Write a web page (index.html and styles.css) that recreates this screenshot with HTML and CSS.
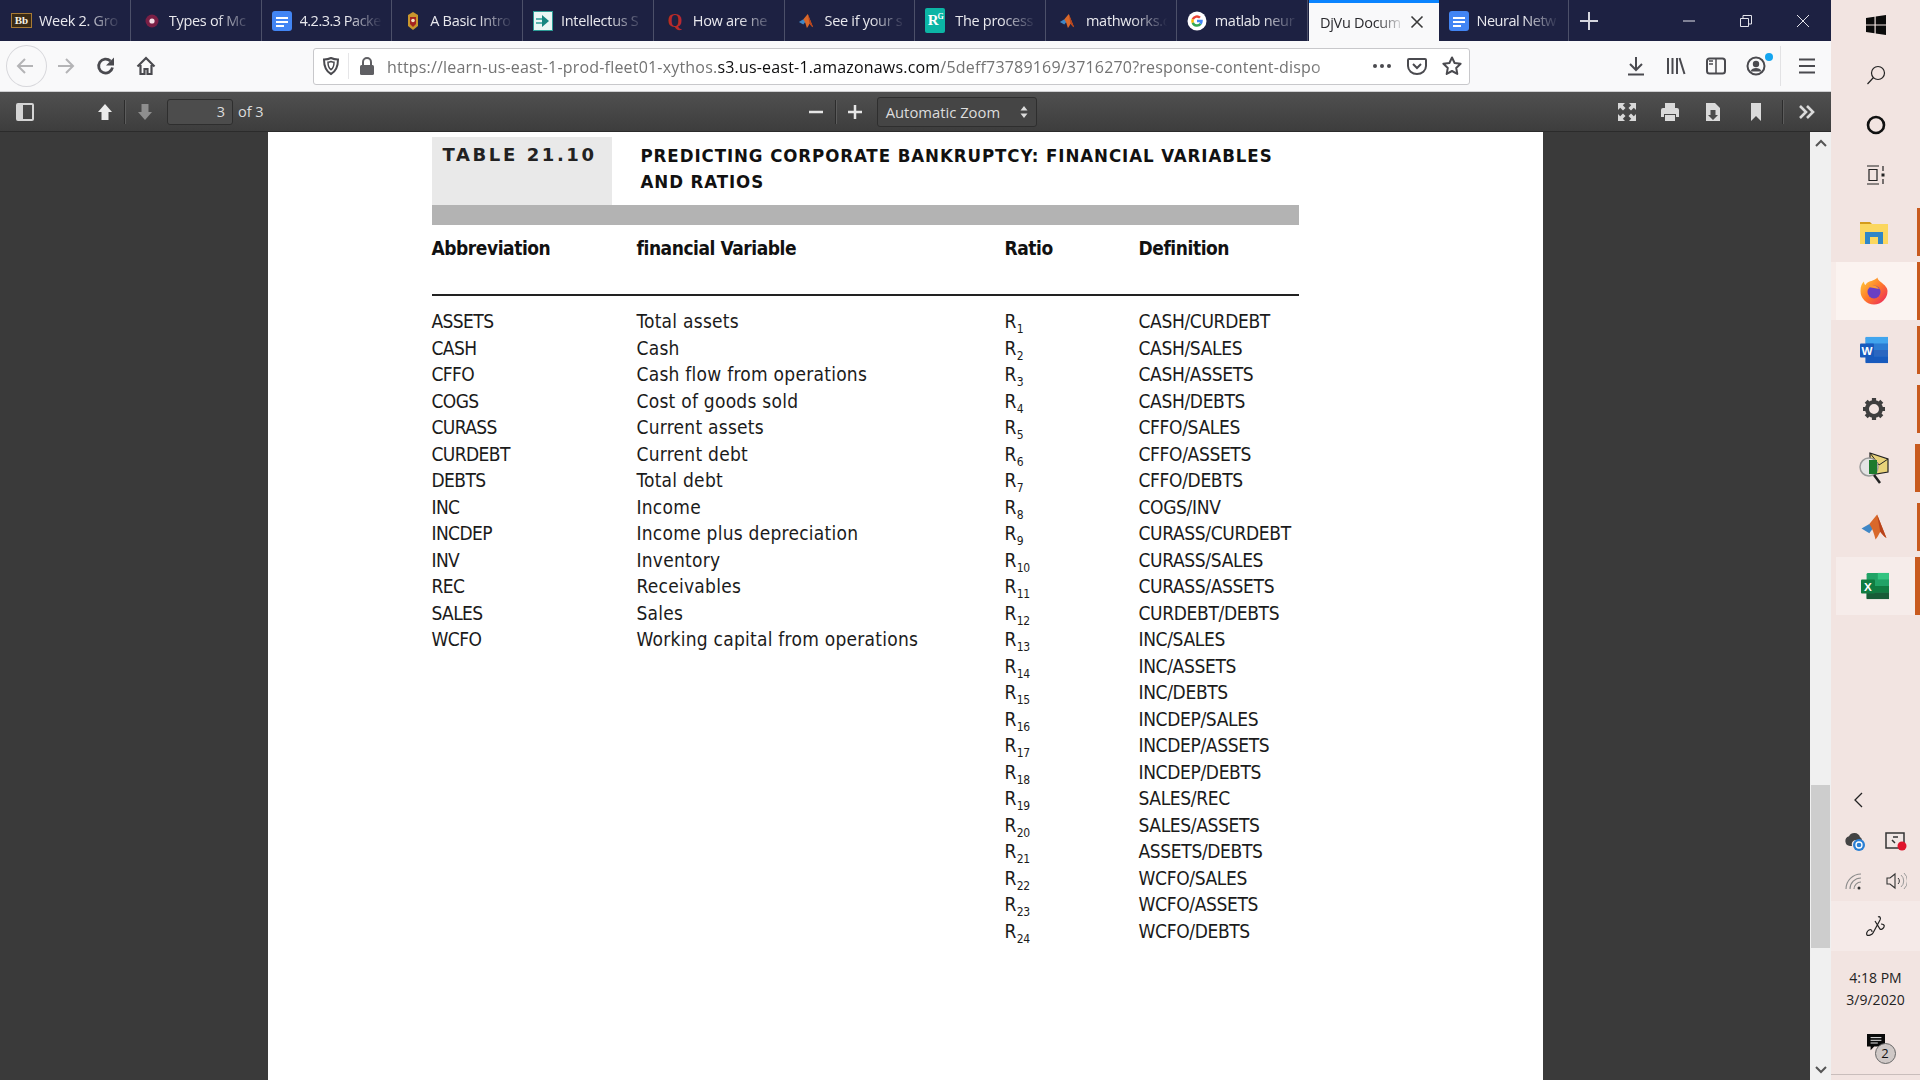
FILE: index.html
```html
<!DOCTYPE html>
<html lang="en">
<head>
<meta charset="utf-8">
<title>DjVu Document</title>
<link rel="stylesheet" href="styles.css">
</head>
<body>
<div class="desktop">
<div class="browser">
  <div class="tabbar">
    <div class="tab"><span class="fav bb">Bb</span><span class="tab-title">Week 2. Gro</span></div>
    <div class="tab"><svg class="fav" viewBox="0 0 16 16"><circle cx="8" cy="8" r="6.500" fill="#7a1f45"/><circle cx="8" cy="8" r="2.600" fill="#f4dfe6"/></svg><span class="tab-title">Types of Mc</span></div>
    <div class="tab"><svg class="fav docs" viewBox="0 0 20 20"><rect width="20" height="20" rx="3" fill="#4285f4"/><path d="M4 7h12M4 11h12M4 15h8" stroke="#fff" stroke-width="2"/></svg><span class="tab-title tight">4.2.3.3 Packe</span></div>
    <div class="tab"><svg class="fav crest" viewBox="0 0 12 20"><path d="M1 4l5-3 5 3v11l-5 4-5-4z" fill="#c9962d"/><path d="M3 6h6v7l-3 3-3-3z" fill="#a5231f"/><circle cx="6" cy="9.500" r="1.800" fill="#f1e2c4"/></svg><span class="tab-title">A Basic Intro</span></div>
    <div class="tab"><svg class="fav docs" viewBox="0 0 20 20"><rect x=".5" y=".5" width="19" height="19" fill="#e9f6f4" stroke="#2d9c96"/><path d="M9 4l7 6-7 6z" fill="#14857f"/><path d="M3 8h6M3 12h6" stroke="#2d9c96" stroke-width="1.500"/></svg><span class="tab-title">Intellectus S</span></div>
    <div class="tab"><span class="fav quora">Q</span><span class="tab-title">How are ne</span></div>
    <div class="tab"><svg class="fav fav-m" viewBox="0 0 18 18"><use href="#matlab"/></svg><span class="tab-title">See if your s</span></div>
    <div class="tab"><span class="fav rg">R<sup class="rg-g">G</sup></span><span class="tab-title">The process</span></div>
    <div class="tab"><svg class="fav fav-m" viewBox="0 0 18 18"><use href="#matlab"/></svg><span class="tab-title">mathworks.c</span></div>
    <div class="tab"><svg class="fav docs fav-g" viewBox="0 0 20 20"><circle cx="10" cy="10" r="9.500" fill="#fff"/><path d="M5.800 8.300A4.500 4.500 0 0 1 13 6.700" fill="none" stroke="#ea4335" stroke-width="2.500"/><path d="M5.800 8.300a4.500 4.500 0 0 0 0 3.400" fill="none" stroke="#fbbc05" stroke-width="2.500"/><path d="M5.800 11.700a4.500 4.500 0 0 0 7.800 1" fill="none" stroke="#34a853" stroke-width="2.500"/><path d="M10 10h4.500a4.500 4.500 0 0 1-1 2.800" fill="none" stroke="#4285f4" stroke-width="2.500"/></svg><span class="tab-title">matlab neur</span></div>
    <div class="tab tab-active"><span class="tab-title">DjVu Docum</span><svg class="tab-close" viewBox="0 0 14 14"><path d="M1.500 1.500l11 11M12.500 1.500l-11 11" stroke="#3a3a3a" stroke-width="1.600"/></svg></div>
    <div class="tab"><svg class="fav docs" viewBox="0 0 20 20"><rect width="20" height="20" rx="3" fill="#4285f4"/><path d="M4 7h12M4 11h12M4 15h8" stroke="#fff" stroke-width="2"/></svg><span class="tab-title tight">Neural Netw</span></div>
    <svg class="newtab" viewBox="0 0 18 18"><path d="M9 0v18M0 9h18" stroke="#d5d6de" stroke-width="2"/></svg>
    <div class="winctl">
      <svg class="winbtn" viewBox="0 0 14 14"><path d="M1 7h12" stroke="#e3e3ea"/></svg>
      <svg class="winbtn" viewBox="0 0 14 14"><path d="M1.500 4.500h8v8h-8zM4 4.500V1.500h8.500V10H9.500" fill="none" stroke="#e3e3ea"/></svg>
      <svg class="winbtn" viewBox="0 0 14 14"><path d="M1 1l12 12M13 1L1 13" stroke="#e3e3ea"/></svg>
    </div>
  </div>

  <div class="navbar">
    <div class="nav-btn back"><svg class="ico" viewBox="0 0 20 20"><path d="M18 10H3M10 3l-7 7 7 7" fill="none" stroke="#b4b4b6" stroke-width="2"/></svg></div>
    <div class="nav-btn"><svg class="ico" viewBox="0 0 20 20"><path d="M2 10h15M10 3l7 7-7 7" fill="none" stroke="#b4b4b6" stroke-width="2"/></svg></div>
    <div class="nav-btn"><svg class="ico" viewBox="0 0 20 20"><path d="M16.500 11.500A7 7 0 1 1 14.500 5" fill="none" stroke="#4a4a4f" stroke-width="2.800"/><path d="M18 1.500v8h-8z" fill="#4a4a4f"/></svg></div>
    <div class="nav-btn"><svg class="ico" viewBox="0 0 20 20"><path d="M1.500 10.500L10 2l8.500 8.500M4.500 9v9h4v-5h3v5h4V9" fill="none" stroke="#4a4a4f" stroke-width="2.200"/></svg></div>
    <div class="urlbar">
      <div class="url-shield"><svg class="ico" viewBox="0 0 20 20"><path d="M10 2c2.500 1.200 4.500 1.500 7 1.500 0 7-1.500 11.500-7 14.500C4.500 15 3 10.500 3 3.500c2.500 0 4.500-.3 7-1.500z" fill="none" stroke="#4a4a4f" stroke-width="2"/><path d="M10 5.500c1 .5 2 .7 3 .7 0 3.500-1 6-3 7.500-2-1.500-3-4-3-7.500 1 0 2-.2 3-.7z" fill="none" stroke="#4a4a4f" stroke-width="1.500"/></svg></div>
      <svg class="lock" viewBox="0 0 16 18"><path d="M4 8V5a4 4 0 0 1 8 0v3" fill="none" stroke="#5f5f63" stroke-width="2"/><rect x="1" y="8" width="14" height="10" rx="1.500" fill="#5f5f63"/></svg>
      <div class="url-text">https://learn-us-east-1-prod-fleet01-xythos.<span class="url-host">s3.us-east-1.amazonaws.com</span>/5deff73789169/3716270?response-content-dispo</div>
      <div class="url-actions">
        <svg class="url-ico" viewBox="0 0 20 20"><circle cx="3" cy="10" r="2" fill="#4a4a4f"/><circle cx="10" cy="10" r="2" fill="#4a4a4f"/><circle cx="17" cy="10" r="2" fill="#4a4a4f"/></svg>
        <svg class="url-ico" viewBox="0 0 20 20"><path d="M2 3h16a1 1 0 0 1 1 1v6a9 8 0 0 1-18 0V4a1 1 0 0 1 1-1z" fill="none" stroke="#4a4a4f" stroke-width="2"/><path d="M6 8l4 4 4-4" fill="none" stroke="#4a4a4f" stroke-width="2"/></svg>
        <svg class="url-ico" viewBox="0 0 20 20"><path d="M10 1.500l2.600 5.500 6 .8-4.400 4.100 1.100 6L10 15l-5.300 2.900 1.100-6L1.400 7.800l6-.8z" fill="none" stroke="#4a4a4f" stroke-width="2" stroke-linejoin="round"/></svg>
      </div>
    </div>
    <div class="nav-right">
      <div class="nav-btn"><svg class="ico" viewBox="0 0 20 20"><path d="M10 1v12M4 8l6 6 6-6M2 18.500h16" fill="none" stroke="#4a4a4f" stroke-width="2"/></svg></div>
      <div class="nav-btn"><svg class="ico" viewBox="0 0 20 20"><path d="M2 2v16M6.500 2v16M11 2v16M13.500 2l5 16" fill="none" stroke="#4a4a4f" stroke-width="2"/></svg></div>
      <div class="nav-btn"><svg class="ico" viewBox="0 0 20 20"><rect x="1" y="2.500" width="18" height="15" rx="2.500" fill="none" stroke="#4a4a4f" stroke-width="2"/><path d="M10 3v14" stroke="#4a4a4f" stroke-width="1.500"/><path d="M3 5h4M3 8h4" stroke="#4a4a4f" stroke-width="1.500"/></svg></div>
      <div class="nav-btn account"><svg class="ico" viewBox="0 0 20 20"><circle cx="10" cy="10" r="8.500" fill="none" stroke="#4a4a4f" stroke-width="2"/><circle cx="10" cy="8" r="3.200" fill="#4a4a4f"/><path d="M4.500 15.500c1-3 3-3.500 5.500-3.500s4.500.5 5.500 3.500" fill="#4a4a4f"/></svg><span class="badge-dot"></span></div>
      <div class="nav-sep"></div>
      <svg class="ico menu" viewBox="0 0 20 20"><path d="M2 3.500h16M2 10h16M2 16.500h16" stroke="#4a4a4f" stroke-width="2.200"/></svg>
    </div>
  </div>

  <div class="pdfbar">
    <svg class="pdf-ico sidebar" viewBox="0 0 18 18"><rect x="1" y="1" width="16" height="16" rx="1" fill="none" stroke="#d4d4d4" stroke-width="2"/><rect x="2" y="2" width="5" height="14" fill="#d4d4d4"/></svg>
    <svg class="pdf-ico up" viewBox="0 0 18 18"><path d="M9 1l7 8h-3.500v8h-7V9H2z" fill="#ececec"/></svg>
    <span class="pdf-sep"></span>
    <svg class="pdf-ico down" viewBox="0 0 18 18"><path d="M9 17l7-8h-3.500V1h-7v8H2z" fill="#8e8e8e"/></svg>
    <div class="page-input">3</div>
    <span class="page-of">of 3</span>
    <div class="zoom-group">
      <svg class="pdf-ico" viewBox="0 0 14 14"><path d="M0 7h14" stroke="#e6e6e6" stroke-width="2.500"/></svg>
      <span class="pdf-sep zoom-sep"></span>
      <svg class="pdf-ico" viewBox="0 0 14 14"><path d="M0 7h14M7 0v14" stroke="#e6e6e6" stroke-width="2.500"/></svg>
      <div class="zoom-select"><span>Automatic Zoom</span><svg class="caret" viewBox="0 0 8 14"><path d="M4 1l3.500 4.500h-7zM4 13L.5 8.500h7z" fill="#dcdcdc"/></svg></div>
    </div>
    <div class="pdf-right">
      <svg class="pdf-ico" viewBox="0 0 18 18"><path d="M0 0h7L4.800 2.200 7.500 5 5 7.500 2.200 4.800 0 7zM18 0h-7l2.200 2.200L10.500 5 13 7.500l2.800-2.700L18 7zM0 18h7l-2.200-2.200 2.700-2.800L5 10.500l-2.800 2.700L0 11zM18 18h-7l2.200-2.200-2.700-2.800 2.500-2.500 2.800 2.700L18 11z" fill="#d8d8d8"/></svg>
      <svg class="pdf-ico print" viewBox="0 0 20 18"><path d="M5 0h10v5H5zM1 7a2 2 0 0 1 2-2h14a2 2 0 0 1 2 2v7h-3v-3H4v3H1z" fill="#dadada"/><path d="M5 12h10v6H5z" fill="#dadada"/></svg>
      <svg class="pdf-ico" viewBox="0 0 18 18"><path d="M2 0h9l5 5v13H2z" fill="#dadada"/><path d="M6.500 7h5v5H14l-5 5-5-5h2.500z" fill="#4a4a4a"/></svg>
      <svg class="pdf-ico" viewBox="0 0 18 18"><path d="M4 0h10v18l-5-5-5 5z" fill="#dadada"/></svg>
      <span class="pdf-sep right-sep"></span>
      <svg class="pdf-ico more" viewBox="0 0 18 14"><path d="M2 1l6 6-6 6M9 1l6 6-6 6" fill="none" stroke="#dadada" stroke-width="2.600"/></svg>
    </div>
  </div>

  <div class="viewer">
    <div class="canvas">
      <div class="page">
        <div class="table-head">
          <div class="table-label">TABLE 21.10</div>
          <div class="table-title">PREDICTING CORPORATE BANKRUPTCY: FINANCIAL VARIABLES<br>AND RATIOS</div>
        </div>
        <div class="table-band"></div>
        <div class="col-heads row"><span>Abbreviation</span><span>financial Variable</span><span>Ratio</span><span>Definition</span></div>
        <div class="table-body">
          <div class="row"><span>ASSETS</span><span>Total assets</span><span>R<sub>1</sub></span><span>CASH/CURDEBT</span></div>
          <div class="row"><span>CASH</span><span>Cash</span><span>R<sub>2</sub></span><span>CASH/SALES</span></div>
          <div class="row"><span>CFFO</span><span>Cash flow from operations</span><span>R<sub>3</sub></span><span>CASH/ASSETS</span></div>
          <div class="row"><span>COGS</span><span>Cost of goods sold</span><span>R<sub>4</sub></span><span>CASH/DEBTS</span></div>
          <div class="row"><span>CURASS</span><span>Current assets</span><span>R<sub>5</sub></span><span>CFFO/SALES</span></div>
          <div class="row"><span>CURDEBT</span><span>Current debt</span><span>R<sub>6</sub></span><span>CFFO/ASSETS</span></div>
          <div class="row"><span>DEBTS</span><span>Total debt</span><span>R<sub>7</sub></span><span>CFFO/DEBTS</span></div>
          <div class="row"><span>INC</span><span>Income</span><span>R<sub>8</sub></span><span>COGS/INV</span></div>
          <div class="row"><span>INCDEP</span><span>Income plus depreciation</span><span>R<sub>9</sub></span><span>CURASS/CURDEBT</span></div>
          <div class="row"><span>INV</span><span>Inventory</span><span>R<sub>10</sub></span><span>CURASS/SALES</span></div>
          <div class="row"><span>REC</span><span>Receivables</span><span>R<sub>11</sub></span><span>CURASS/ASSETS</span></div>
          <div class="row"><span>SALES</span><span>Sales</span><span>R<sub>12</sub></span><span>CURDEBT/DEBTS</span></div>
          <div class="row"><span>WCFO</span><span>Working capital from operations</span><span>R<sub>13</sub></span><span>INC/SALES</span></div>
          <div class="row"><span></span><span></span><span>R<sub>14</sub></span><span>INC/ASSETS</span></div>
          <div class="row"><span></span><span></span><span>R<sub>15</sub></span><span>INC/DEBTS</span></div>
          <div class="row"><span></span><span></span><span>R<sub>16</sub></span><span>INCDEP/SALES</span></div>
          <div class="row"><span></span><span></span><span>R<sub>17</sub></span><span>INCDEP/ASSETS</span></div>
          <div class="row"><span></span><span></span><span>R<sub>18</sub></span><span>INCDEP/DEBTS</span></div>
          <div class="row"><span></span><span></span><span>R<sub>19</sub></span><span>SALES/REC</span></div>
          <div class="row"><span></span><span></span><span>R<sub>20</sub></span><span>SALES/ASSETS</span></div>
          <div class="row"><span></span><span></span><span>R<sub>21</sub></span><span>ASSETS/DEBTS</span></div>
          <div class="row"><span></span><span></span><span>R<sub>22</sub></span><span>WCFO/SALES</span></div>
          <div class="row"><span></span><span></span><span>R<sub>23</sub></span><span>WCFO/ASSETS</span></div>
          <div class="row"><span></span><span></span><span>R<sub>24</sub></span><span>WCFO/DEBTS</span></div>
        </div>
      </div>
    </div>
    <div class="scrollbar">
      <svg class="sb-arrow" viewBox="0 0 12 8"><path d="M1 7l5-5 5 5" fill="none" stroke="#555" stroke-width="2"/></svg>
      <div class="sb-thumb"></div>
      <svg class="sb-arrow" viewBox="0 0 12 8"><path d="M1 1l5 5 5-5" fill="none" stroke="#555" stroke-width="2"/></svg>
    </div>
  </div>
</div>

<aside class="taskbar">
  <div class="tb-sys">
    <svg class="tb-sysico" viewBox="0 0 20 20"><path d="M0 3l8.500-1.300V9.500H0zM9.700 1.500L20 0v9.500H9.700zM0 10.500h8.500v7.800L0 17zM9.700 10.500H20V20L9.700 18.500z" fill="#0b0b0b"/></svg>
    <svg class="tb-sysico" viewBox="0 0 20 20"><circle cx="12" cy="8" r="6.500" fill="none" stroke="#222" stroke-width="1.200"/><path d="M7.500 12.500L1.500 19" stroke="#222" stroke-width="1.200"/></svg>
    <svg class="tb-sysico" viewBox="0 0 20 20"><circle cx="10" cy="10" r="8" fill="none" stroke="#111" stroke-width="2.600"/></svg>
    <svg class="tb-sysico" viewBox="0 0 20 20"><path d="M1 1h12M1 19h12M3 4.500h8v11H3zM17 1v5M17 14v5" fill="none" stroke="#222" stroke-width="1.200"/><rect x="15.500" y="8.500" width="3" height="3" fill="#222"/></svg>
  </div>
  <div class="tb-apps">
    <div class="tb-app"><svg class="tb-ico" viewBox="0 0 28 24"><path d="M0 2h10l2 2H0z" fill="#d49c1c"/><path d="M0 4h28v20H0z" fill="#fbd75f"/><path d="M5 12h18v12h-5v-7h-8v7H5z" fill="#2f86c8"/></svg></div>
    <div class="tb-app tb-app-active"><svg class="tb-ico" viewBox="0 0 28 28"><defs><linearGradient id="fx" x1="0" y1="0" x2="1" y2="1"><stop offset="0" stop-color="#ffd23c"/><stop offset=".5" stop-color="#ff7a2a"/><stop offset="1" stop-color="#e91e63"/></linearGradient></defs><path d="M14 27.500A13.500 13.500 0 0 1 .5 14C.5 9 2 6 4 4.500c0 2 .5 3 1.500 3.500C7 5 10 4 11.500 4c2-1 5-2 6-3.500 0 2 1.500 3 4 5 3 2.500 6 5 6 8.500A13.500 13.500 0 0 1 14 27.500z" fill="url(#fx)"/><circle cx="14" cy="15" r="6.500" fill="#6b3fc4"/><path d="M8 10c3-3 9-2 11 2-3-1-7-1-11-2z" fill="#ff9a30"/></svg></div>
    <div class="tb-app"><svg class="tb-ico" viewBox="0 0 30 28"><rect x="6" y="0" width="24" height="28" rx="1.500" fill="#2b7cd3"/><rect x="6" y="0" width="24" height="7" fill="#41a5ee"/><rect x="6" y="14" width="24" height="7" fill="#2b66c0"/><rect x="6" y="21" width="24" height="7" fill="#185abd"/><rect x="0" y="7" width="15" height="15" rx="1" fill="#185abd"/><text class="app-letter" x="7.500" y="19">W</text></svg></div>
    <div class="tb-app"><svg class="tb-ico gear" viewBox="0 0 24 24"><circle cx="12" cy="12" r="7" fill="none" stroke="#3f3f3f" stroke-width="4"/><path d="M12 1v5M12 18v5M1 12h5M18 12h5M4.200 4.200l3.500 3.500M16.300 16.300l3.500 3.500M19.800 4.200l-3.500 3.500M7.700 16.300l-3.500 3.500" stroke="#3f3f3f" stroke-width="4.200"/></svg></div>
    <div class="tb-app tb-app-wide"><svg class="tb-ico mail" viewBox="0 0 30 32"><path d="M11 1l18 6v13l-18 3z" fill="#e8d27a" stroke="#222" stroke-width="1.200"/><path d="M11 1l9 12 9-6" fill="none" stroke="#222"/><circle cx="10" cy="15" r="9" fill="#e4e4e4" stroke="#9a9a9a" stroke-width="1.500"/><path d="M10 8h8v14h-8z" fill="#1d7a2e"/><path d="M15 23l6 8" stroke="#222" stroke-width="2.500"/></svg></div>
    <div class="tb-app"><svg class="tb-ico" viewBox="0 0 18 18"><use href="#matlab"/></svg></div>
    <div class="tb-app tb-app-wide tb-app-hover"><svg class="tb-ico" viewBox="0 0 30 28"><rect x="6" y="0" width="24" height="28" rx="1.500" fill="#21a366"/><rect x="18" y="0" width="12" height="7" fill="#33c481"/><rect x="6" y="14" width="24" height="7" fill="#107c41"/><rect x="6" y="21" width="24" height="7" fill="#185c37"/><rect x="0" y="7" width="15" height="15" rx="1" fill="#107c41"/><text class="app-letter" x="7.500" y="19">X</text></svg></div>
  </div>
  <div class="tb-tray">
    <svg class="chev" viewBox="0 0 10 16"><path d="M9 1L2 8l7 7" fill="none" stroke="#222" stroke-width="1.300"/></svg>
    <div class="tray-grid">
      <svg class="tray-ico" viewBox="0 0 22 20"><path d="M6 15a5 5 0 0 1-1-9.800A6 6 0 0 1 16 6a4 4 0 0 1 2 3H11a5 5 0 0 0-3 6z" fill="#444"/><circle cx="15" cy="14" r="6" fill="#2a7fd4"/><circle cx="15" cy="14" r="3" fill="none" stroke="#fff" stroke-width="1.300"/></svg>
      <svg class="tray-ico" viewBox="0 0 22 20"><path d="M1 2h18v15H1z" fill="#f0e6e4" stroke="#333" stroke-width="1.500"/><path d="M8 6h5M7 9l3 3" stroke="#333" stroke-width="1.500"/><circle cx="17" cy="15" r="4.500" fill="#e0142c"/></svg>
      <svg class="tray-ico" viewBox="0 0 22 20"><path d="M2 18A15 15 0 0 1 17 3M6 18A11 11 0 0 1 17 7M10 18a7 7 0 0 1 7-7" fill="none" stroke="#8a8a8a" stroke-width="1.100"/><circle cx="15" cy="17" r="1.500" fill="#333"/></svg>
      <svg class="tray-ico" viewBox="0 0 22 20"><path d="M2 7h3l5-4v14l-5-4H2z" fill="none" stroke="#333" stroke-width="1.100"/><path d="M13 7a4 4 0 0 1 0 6" fill="none" stroke="#333"/><path d="M16 4a8 8 0 0 1 0 12M19 2a11 11 0 0 1 0 16" fill="none" stroke="#999"/></svg>
    </div>
    <div class="tray-pen"><svg class="tray-ico pen" viewBox="0 0 22 22"><path d="M13 2c2-1 3 1 2 3L8 18c-1 2-5 3-6 2s0-4 2-5 3 0 3 2M10 6l5 8c1 1 3 0 4-2s-1-3-3-3" fill="none" stroke="#222" stroke-width="1.200"/></svg></div>
    <div class="clock"><div>4:18 PM</div><div>3/9/2020</div></div>
    <div class="notify"><svg class="notify-ico" viewBox="0 0 20 20"><path d="M0 0h20v14H8l-4 4v-4H0z" fill="#0a0a0a"/><path d="M4 4h12M4 7h12M4 10h8" stroke="#fff"/></svg><span class="notify-count">2</span></div>
  </div>
</aside>
</div>

<svg class="defs" width="0" height="0"><defs><g id="matlab"><path d="M1 10l5-3 3 2-3 4z" fill="#3f87c6"/><path d="M6 7l5-6 6 15c-2-1-3-3-4-4-1 2-2 4-3 5-1-4-2-7-4-10z" fill="#d9682a"/><path d="M11 1l6 15c-2-1-3-3-4-4z" fill="#b8431c"/></g></defs></svg>
</body>
</html>
```

FILE: styles.css
```css
* { box-sizing: border-box; }
html, body { margin: 0; height: 100%; overflow: hidden; }
body { font-family: "Open Sans", "Noto Sans", sans-serif; }
svg { display: block; flex: none; }
.defs { position: absolute; }

.desktop { display: flex; width: 1920px; height: 1080px; }
.browser { width: 1831px; display: flex; flex-direction: column; }

/* tab strip */
.tabbar { height: 41px; background: #1d2142; display: flex; align-items: stretch; color: #e9e9ee; position: relative; }
.tab { flex: 0 0 130.75px; display: flex; align-items: center; padding-left: 13px; gap: 9px; border-right: 1px solid #4c5069; font-size: 14.5px; overflow: hidden; }
.tab-title { flex: 1; min-width: 0; white-space: nowrap; margin-right: 6px; letter-spacing: -.3px; -webkit-mask-image: linear-gradient(90deg, #000 55%, transparent 97%); mask-image: linear-gradient(90deg, #000 55%, transparent 97%); }
.tight { letter-spacing: -.5px; }
.fav { width: 16px; height: 16px; flex: none; }
.fav-m { margin-right: 2px; }
.fav-g { margin-right: 1px; }
.crest { height: 20px; }
.docs { width: 20px; height: 20px; margin-left: -3px; margin-right: -1px; }
.bb { width: 21px; height: 15px; margin-left: -2px; margin-right: -2px; background: #3a2a14; border: 1px solid #a77a35; color: #f5f1e6; font: 700 11px/13px "Liberation Serif", serif; text-align: center; letter-spacing: 0; }
.quora { width: 16px; height: 20px; margin-right: 1px; color: #b92b27; font: 700 19px/20px "Liberation Serif", serif; text-align: center; }
.rg { width: 20px; height: 25px; margin-left: -3px; margin-right: 1px; background: #0cb5a5; border-radius: 2px; color: #fff; font: 700 15px/25px "Liberation Serif", serif; text-align: center; letter-spacing: -1px; }
.rg-g { font-size: 8px; line-height: 0; vertical-align: 6px; }
.tab-active { background: #f9f9fa; color: #2a2a2e; border-top: 3px solid #0a84ff; border-right: 0; margin-left: 1px; padding: 0 15px 0 11.500px; gap: 3px; flex-basis: 130px; }
.tab-active .tab-title { margin-right: 0; -webkit-mask-image: linear-gradient(90deg, #000 65%, transparent 98%); mask-image: linear-gradient(90deg, #000 65%, transparent 98%); }
.tab-close { width: 14px; height: 14px; }
.newtab { width: 18px; height: 18px; align-self: center; margin-left: 11px; }
.winctl { margin-left: auto; margin-right: 21px; display: flex; gap: 43px; align-items: center; height: 41px; }
.winbtn { width: 14px; height: 14px; }

/* navigation toolbar */
.navbar { height: 51px; background: #f9f9fa; border-bottom: 1px solid #cfcfd1; display: flex; align-items: center; padding-left: 6px; }
.nav-btn { width: 40px; height: 40px; display: flex; align-items: center; justify-content: center; position: relative; flex: none; }
.back { width: 41px; height: 42px; border: 1px solid #d7d7db; border-radius: 50%; margin-right: -1px; padding-right: 3px; }
.ico { width: 20px; height: 20px; }
.urlbar { margin-left: 147px; width: 1157px; height: 37px; background: #fff; border: 1px solid #c8c8cb; border-radius: 3px; display: flex; align-items: center; }
.url-shield { width: 35px; height: 26px; border-right: 1px solid #e6e6e8; display: flex; align-items: center; justify-content: center; }
.lock { width: 16px; height: 18px; margin-left: 10px; }
.url-text { margin-left: 12px; padding-top: 2px; flex: 1; min-width: 0; font-size: 16px; color: #737373; white-space: nowrap; letter-spacing: .19px; -webkit-mask-image: linear-gradient(90deg, #000 96%, transparent 100%); mask-image: linear-gradient(90deg, #000 96%, transparent 100%); }
.url-host { color: #0c0c0d; }
.url-actions { display: flex; align-items: center; gap: 15px; margin-left: 22px; padding-right: 7px; }
.url-ico { width: 20px; height: 20px; }
.nav-right { display: flex; align-items: center; margin-left: 146px; }
.badge-dot { position: absolute; right: 3px; top: 7px; width: 8px; height: 8px; border-radius: 50%; background: #14a5f0; }
.nav-sep { width: 1px; height: 40px; background: #e2e2e4; margin-left: 4px; }
.menu { margin-left: 16px; }

/* pdf toolbar */
.pdfbar { height: 40px; background: linear-gradient(#505050, #3d3d3d); border-bottom: 1px solid #2b2b2b; display: flex; align-items: center; color: #dcdcdc; font-size: 14.5px; padding-left: 16px; }
.pdf-ico { width: 18px; height: 18px; }
.sidebar { margin-right: 62px; }
.pdf-sep { width: 1px; height: 24px; background: #2c2c2c; border-right: 1px solid #5c5c5c; margin: 0 10px; box-sizing: content-box; }
.page-input { margin-left: 13px; width: 66px; height: 26px; border: 1px solid #2e2e2e; border-radius: 3px; background: #4c4c4c; text-align: right; padding-right: 7px; line-height: 24px; }
.page-of { margin-left: 5px; }
.zoom-group { display: flex; align-items: center; margin-left: 545px; }
.zoom-group .pdf-ico { width: 14px; height: 14px; }
.zoom-sep { margin: 0 11px 0 12px; }
.zoom-select { margin-left: 15px; width: 160px; height: 30px; border: 1px solid #2e2e2e; border-radius: 3px; background: #454545; display: flex; align-items: center; justify-content: space-between; padding: 0 8px; font-size: 14.800px; }
.caret { width: 8px; height: 14px; }
.pdf-right { display: flex; align-items: center; gap: 25px; margin-left: 581px; }
.print { width: 20px; margin: 0 -1px; }
.pdf-right .right-sep { margin: 0 0 0 -8px; height: 24px; }
.more { margin-left: -11px; }

/* viewer */
.viewer { flex: 1; min-height: 0; display: flex; }
.canvas { flex: 1; min-width: 0; background: #3a3a3a; display: flex; justify-content: center; overflow: hidden; }
.page { width: 1275px; background: #fff; padding: 5px 0 0 164px; color: #1b1b1b; font-family: "DejaVu Sans Condensed", "DejaVu Sans", sans-serif; font-stretch: condensed; font-size: 19px; }
.table-head { display: flex; height: 68px; }
.table-label { width: 180px; background: #e9e9e9; padding: 8px 0 0 11px; font: 700 18px/20px "DejaVu Sans", sans-serif; letter-spacing: 2.600px; color: #222; white-space: nowrap; }
.table-title { padding: 6px 0 0 29px; font-weight: 700; font-size: 18.500px; line-height: 26px; letter-spacing: .92px; color: #111; white-space: nowrap; }
.table-band { width: 867px; height: 20px; background: #b3b3b3; }
.row { display: grid; grid-template-columns: 205px 368px 134px 1fr; height: 26.500px; line-height: 26.500px; width: 867px; white-space: nowrap; letter-spacing: .25px; }
.col-heads { height: 71px; padding-top: 10px; font-weight: 700; letter-spacing: -.45px; border-bottom: 2px solid #222; color: #111; }
.table-body { padding-top: 12px; }
.table-body span:nth-child(1) { letter-spacing: -.6px; }
.table-body span:nth-child(4) { letter-spacing: -.35px; }
sub { font-size: 12px; line-height: 0; vertical-align: -5px; letter-spacing: -.3px; }

/* scrollbar */
.scrollbar { width: 21px; background: #f0f0f0; display: flex; flex-direction: column; align-items: center; padding: 7px 0 6px; }
.sb-arrow { width: 12px; height: 8px; }
.sb-thumb { width: 19px; height: 163px; background: #cdcdcd; margin-top: auto; margin-bottom: 118px; }

/* taskbar */
.taskbar { width: 89px; height: 1080px; background: #f2e4e1; display: flex; flex-direction: column; }
.tb-sys { display: flex; flex-direction: column; align-items: center; }
.tb-sysico { width: 20px; height: 20px; margin: 15px 0; }
.tb-apps { display: flex; flex-direction: column; margin-top: 3px; gap: 1px; }
.tb-app { height: 48px; margin: 5px 0; display: flex; align-items: center; justify-content: center; border-right: 3px solid #c85a1e; }
.tb-ico { width: 28px; height: 28px; }
.tb-app-active { height: 58px; margin: 0; background: #fbf3f0; border-left: 5px solid #f7ece9; padding-right: 5px; }
.tb-app-wide { border-right-width: 5px; padding-left: 2px; }
.tb-app-hover { height: 58px; margin: 0 0 0 5px; background: #f6ecea; padding-left: 0; padding-right: 2px; }
.gear { width: 24px; height: 24px; }
.mail { width: 30px; height: 32px; }
.app-letter { font: 700 12.500px "Liberation Sans", sans-serif; fill: #fff; text-anchor: middle; }
.tb-tray { margin-top: auto; margin-bottom: 5px; display: flex; flex-direction: column; align-items: center; padding-bottom: 20px; border-bottom: 1px solid #c9bdbb; font-size: 14px; color: #222; }
.chev { width: 10px; height: 16px; margin-right: 36px; margin-bottom: 23px; }
.tray-grid { display: grid; grid-template-columns: 22px 22px; gap: 20px 19px; }
.tray-ico { width: 22px; height: 20px; }
.tray-pen { width: 100%; height: 50px; margin-top: 10px; background: #f5eae8; display: flex; align-items: center; justify-content: center; }
.pen { height: 22px; }
.clock { text-align: center; line-height: 22px; margin-top: 16px; }
.notify { position: relative; width: 20px; height: 20px; margin-top: 23px; }
.notify-ico { width: 20px; height: 18px; }
.notify-count { position: absolute; left: 9px; top: 9px; width: 21px; height: 21px; border-radius: 50%; background: #cfc8c6; border: 1px solid #666; font-size: 13px; line-height: 19px; text-align: center; color: #111; }
```
